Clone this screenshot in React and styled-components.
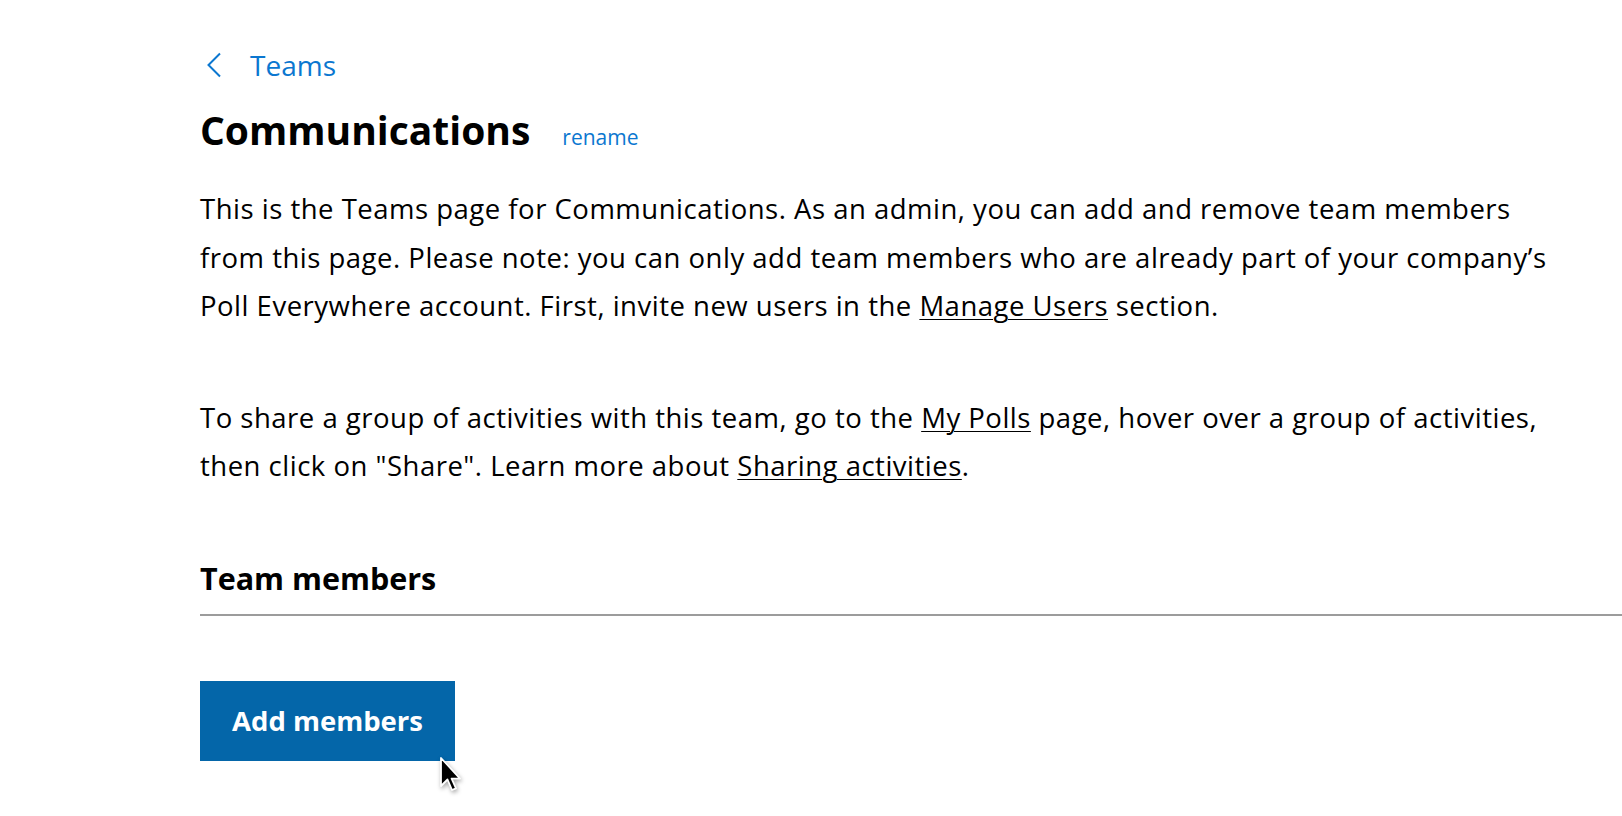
import styled, { createGlobalStyle } from 'styled-components'

// GLOBAL
const GlobalStyle = createGlobalStyle`
  html, body {
    margin: 0;
    padding: 0;
    background: #ffffff;
  }
  body {
    font-family: "Open Sans", Lato, "Liberation Sans", sans-serif;
    color: #000000;
  }
`

// STYLES
const blue = '#0b77d0'

const Page = styled.main`
  position: relative;
  min-height: 816px;
  padding: 45px 0 0 200px;
  box-sizing: border-box;
`

const Breadcrumb = styled.a`
  display: inline-flex;
  align-items: center;
  gap: 28px;
  height: 40px;
  padding-left: 6px;
  font-size: 28px;
  line-height: 40px;
  color: ${blue};
  text-decoration: none;
`

const TitleRow = styled.div`
  display: flex;
  align-items: baseline;
  gap: 32px;
  margin-top: 20px;
`

const Title = styled.h1`
  margin: 0;
  font-size: 39px;
  line-height: 50px;
  font-weight: 700;
`

const SmallLink = styled.a`
  font-size: 21px;
  color: ${blue};
  text-decoration: none;
`

const Paragraph = styled.p`
  margin: ${p => p.$top || '0'} 0 0;
  font-size: 27.5px;
  letter-spacing: 0.5px;
  line-height: 48.5px;
  white-space: nowrap;
`

const InlineLink = styled.a`
  color: inherit;
  text-decoration: underline;
  text-underline-offset: 3px;
  text-decoration-thickness: 1px;
`

const SectionTitle = styled.h2`
  margin: 65px 0 0;
  font-size: 30.5px;
  line-height: 44px;
  font-weight: 700;
`

const Divider = styled.hr`
  margin: 14px 0 0;
  border: none;
  border-top: 2px solid #9c9c9c;
  height: 0;
`

const PrimaryButton = styled.button`
  display: block;
  margin-top: 65px;
  height: 80px;
  padding: 0 32px;
  border: none;
  border-radius: 0;
  background: #0466a9;
  color: #ffffff;
  font-family: inherit;
  font-size: 27.5px;
  font-weight: 700;
  cursor: pointer;
`

const Pointer = styled.svg`
  position: absolute;
  left: 439px;
  top: 756px;
  pointer-events: none;
  filter: drop-shadow(1px 2px 2px rgba(0, 0, 0, 0.35));
`

// MAIN COMPONENT
export default function App() {
  return (
    <>
      <GlobalStyle />
      <Page>
        <Breadcrumb href="#">
          <svg width="16" height="26" viewBox="0 0 16 26" fill="none">
            <path d="M14 1.5 L2.5 13 L14 24.5" stroke={blue} strokeWidth="2" />
          </svg>
          Teams
        </Breadcrumb>

        <TitleRow>
          <Title>Communications</Title>
          <SmallLink href="#">rename</SmallLink>
        </TitleRow>

        <Paragraph $top="30px">
          This is the Teams page for Communications. As an admin, you can add and remove team members
          <br />
          from this page. Please note: you can only add team members who are already part of your company’s
          <br />
          Poll Everywhere account. First, invite new users in the <InlineLink href="#">Manage Users</InlineLink> section.
        </Paragraph>

        <Paragraph $top="63px">
          To share a group of activities with this team, go to the <InlineLink href="#">My Polls</InlineLink> page, hover over a group of activities,
          <br />
          then click on "Share". Learn more about <InlineLink href="#">Sharing activities</InlineLink>.
        </Paragraph>

        <SectionTitle>Team members</SectionTitle>
        <Divider />

        <PrimaryButton>Add members</PrimaryButton>

        <Pointer width="24" height="38" viewBox="0 0 24 38">
          <path d="M2 2 L2 30 L8.5 23.5 L13 34 L17 32.3 L12.6 22.6 L21 22.6 Z" fill="#000" stroke="#fff" strokeWidth="1.8" strokeLinejoin="round" />
        </Pointer>
      </Page>
    </>
  )
}
